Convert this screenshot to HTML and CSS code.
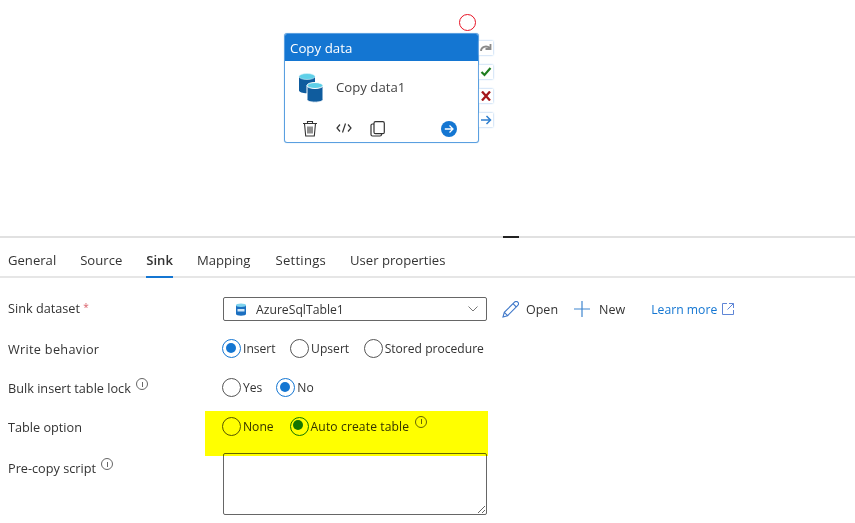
FILE: index.html
```html
<!DOCTYPE html>
<html lang="en">
<head>
<meta charset="utf-8">
<title>Copy data - Sink</title>
<link rel="stylesheet" href="styles.css">
</head>
<body>
<div class="canvas">
  <span class="marker"></span>
  <div class="node">
    <div class="node-head">Copy data</div>
    <div class="node-body">
      <svg class="db" width="30" height="30" viewBox="0 0 30 30">
        <path d="M1 3.500v14c0 1.500 3.500 2.700 8 2.700s8-1.200 8-2.700v-14z" fill="#0f5c9e"/>
        <ellipse cx="9" cy="3.500" rx="8" ry="3" fill="#5fd0e8" stroke="#d6f3fa" stroke-width=".6"/>
        <path d="M9 12.500v14c0 1.500 3.500 2.700 8 2.700s8-1.200 8-2.700v-14z" fill="#0f5c9e" stroke="#fff" stroke-width="1"/>
        <ellipse cx="17" cy="12.500" rx="8" ry="3" fill="#5fd0e8" stroke="#fff" stroke-width="1"/>
      </svg>
      <span class="node-name">Copy data1</span>
    </div>
    <div class="node-foot">
      <svg class="ic-trash" width="16" height="17" viewBox="0 0 16 17" fill="none" stroke="#333" stroke-width="1.100"><path d="M1 3.500h14M5.500 3.500V1.500h5v2M2.500 3.500l1.200 12.500h8.600l1.200-12.500M6 6.500v7M8 6.500v7M10 6.500v7"/></svg>
      <svg class="ic-code" width="16" height="10" viewBox="0 0 16 10" fill="none" stroke="#333" stroke-width="1.200"><path d="M4 1.500L1 5l3 3.500M12 1.500L15 5l-3 3.500M9.500 .5L6.500 9.500"/></svg>
      <svg class="ic-copy" width="15" height="16" viewBox="0 0 15 16" fill="none" stroke="#333" stroke-width="1.200"><rect x="4" y=".7" width="10.300" height="12" rx="1.500"/><path d="M4 3H2.500A1.500 1.500 0 0 0 1 4.500v9A1.500 1.500 0 0 0 2.500 15H10a1.500 1.500 0 0 0 1.500-1.500v-.8"/></svg>
      <svg class="ic-go" width="16" height="16" viewBox="0 0 16 16"><circle cx="8" cy="8" r="8" fill="#1476d2"/><path d="M3.800 8h8M8.500 4.500L12 8l-3.500 3.500" fill="none" stroke="#fff" stroke-width="1.300"/></svg>
    </div>
    <div class="ports">
      <span class="port"><svg width="12" height="10" viewBox="0 0 12 10" fill="none" stroke="#8a8a8a" stroke-width="1.800"><path d="M1 8c0-4 5-6 9-3M10.500 1v5h-5"/></svg></span>
      <span class="port"><svg width="12" height="10" viewBox="0 0 12 10" fill="none" stroke="#1f7d1f" stroke-width="2.200"><path d="M1.500 5l3 3 6-7"/></svg></span>
      <span class="port"><svg width="12" height="10" viewBox="0 0 12 10" fill="none" stroke="#a4161a" stroke-width="2.300"><path d="M2 .5l8 9M10 .5l-8 9"/></svg></span>
      <span class="port"><svg width="12" height="10" viewBox="0 0 12 10" fill="none" stroke="#2f7fcf" stroke-width="1.500"><path d="M1 5h9.500M6.500 1l4 4-4 4"/></svg></span>
    </div>
  </div>
</div>
<div class="splitter"><span class="grip"></span></div>
<nav class="tabs">
  <span class="tab">General</span>
  <span class="tab">Source</span>
  <span class="tab tab-active">Sink</span>
  <span class="tab tab-mapping">Mapping</span>
  <span class="tab tab-settings">Settings</span>
  <span class="tab">User properties</span>
</nav>
<form class="form">
  <div class="row row-dataset">
    <div class="label">Sink dataset <span class="req">*</span></div>
    <div class="field">
      <div class="select">
        <svg class="sql" width="12" height="13" viewBox="0 0 12 13"><path d="M1 2v9c0 1 2.200 1.700 5 1.700s5-.7 5-1.700V2z" fill="#1b6fc0"/><ellipse cx="6" cy="2.200" rx="5" ry="1.700" fill="#7fd3ee"/><rect x="2.500" y="6" width="7" height="2.500" fill="#cfe6f7"/></svg>
        <span class="select-text">AzureSqlTable1</span>
        <svg class="chev" width="10" height="6" viewBox="0 0 10 6" fill="none" stroke="#777" stroke-width="1"><path d="M.5 .5L5 5 9.500 .5"/></svg>
      </div>
      <span class="action action-open"><svg width="17" height="17" viewBox="0 0 17 17" fill="none" stroke="#3f78c9" stroke-width="1.100"><path d="M1 16l1.300-4.700L12.500 1.200a1.800 1.800 0 0 1 3.300 3.200L5.600 14.700zM2.300 11.300l3.300 3.400M11 2.700l3.300 3.300"/></svg>Open</span>
      <span class="action action-new"><svg width="16" height="16" viewBox="0 0 16 16" fill="none" stroke="#3f86cf" stroke-width="1.200"><path d="M8 0v16M0 8h16"/></svg>New</span>
      <span class="learn">Learn more <svg width="12" height="12" viewBox="0 0 12 12" fill="none" stroke="#5f86d6" stroke-width="1"><path d="M5 .5H.5v11h11V7M7 .5h4.500V5M11.500 .5L5.500 6.500"/></svg></span>
    </div>
  </div>
  <div class="row row-write">
    <div class="label">Write behavior</div>
    <div class="field radios">
      <span class="radio radio-on">Insert</span>
      <span class="radio">Upsert</span>
      <span class="radio">Stored procedure</span>
    </div>
  </div>
  <div class="row row-lock">
    <div class="label">Bulk insert table lock <span class="info"></span></div>
    <div class="field radios">
      <span class="radio">Yes</span>
      <span class="radio radio-on">No</span>
    </div>
  </div>
  <div class="row row-table">
    <div class="label">Table option</div>
    <div class="field radios">
      <span class="radio">None</span>
      <span class="radio radio-on radio-auto">Auto create table <span class="info"></span></span>
    </div>
  </div>
  <div class="row row-script">
    <div class="label">Pre-copy script <span class="info"></span></div>
    <div class="field"><textarea class="textarea"></textarea></div>
  </div>
  <div class="highlight"></div>
</form>
</body>
</html>
```
FILE: styles.css
```css
* { box-sizing: border-box; }
html, body { margin: 0; padding: 0; height: 100%; overflow: hidden; background: #fff; }
body { font-family: "Open Sans", "Noto Sans", sans-serif; font-size: 12.1px; color: #333; width: 855px; height: 523px; }

.canvas { position: relative; height: 236px; }
.marker { position: absolute; left: 459px; top: 14px; width: 17px; height: 17px; border: 1.3px solid #e81123; border-radius: 50%; }
.node { position: absolute; left: 284px; top: 33px; width: 195px; height: 110px; border: 1px solid #5a9fe0; border-radius: 3px; background: #fff; box-shadow: 0 0 1px #7ab2e6; }
.node-head { height: 27px; background: #1476d2; color: #fff; font-size: 13.3px; line-height: 28px; padding-left: 5px; border-radius: 2px 2px 0 0; }
.node-body { display: flex; align-items: center; height: 54px; padding-left: 13px; }
.node-name { margin-left: 8px; font-size: 13.2px; color: #444; position: relative; top: -1px; }
.node-foot { position: relative; height: 27px; }
.node-foot svg { position: absolute; }
.ic-trash { left: 17px; top: 5px; }
.ic-code { left: 51px; top: 8px; }
.ic-copy { left: 85px; top: 6px; }
.ic-go { left: 156px; top: 6px; }
.ports { position: absolute; left: 194px; top: 7px; display: flex; flex-direction: column; gap: 10px; }
.port { width: 14px; height: 14px; display: flex; align-items: center; justify-content: center; background: #fff; box-shadow: 0 0 2px #8db9e8; }

.splitter { position: relative; height: 2px; background: #e1e1e1; }
.grip { position: absolute; left: 503px; top: 0; width: 16px; height: 2px; background: #222; }

.tabs { display: flex; gap: 24px; height: 40px; padding-left: 8px; border-bottom: 2px solid #e6e6e6; }
.tab { height: 40px; line-height: 45px; font-size: 13.1px; color: #333; }
.tab-active { font-weight: 600; border-bottom: 2px solid #1476d2; }
.tab-mapping { margin-right: 1px; }
.tab-settings { letter-spacing: .25px; }

.form { position: relative; padding-top: 19px; }
.row { display: flex; padding-left: 8px; }
.label { width: 215px; flex: none; font-size: 12.7px; color: #333; }
.field { display: flex; align-items: center; }
.row-dataset { height: 24px; align-items: center; }
.row-dataset .label { padding-bottom: 2px; }
.row-write { margin-top: 16px; height: 24px; align-items: center; }
.row-write .label { letter-spacing: .3px; }
.row-write .radios { gap: 14.500px; }
.row-lock { margin-top: 15px; height: 24px; align-items: center; }
.row-lock .radios { gap: 14px; }
.row-table { margin-top: 15px; height: 24px; align-items: center; }
.row-table .radios { margin-top: -1px; gap: 16px; }
.radio-auto { letter-spacing: .12px; }
.radio-auto .info { margin-left: 3px; }
.row-script { margin-top: 14px; }
.row-script .label { padding-top: 6px; }

.req { color: #d9606a; font-size: 10px; position: relative; top: -2px; }
.select { display: flex; align-items: center; width: 264px; height: 24px; border: 1px solid #666; border-radius: 2px; padding-left: 11px; }
.select-text { margin-left: 9px; flex: 1; font-size: 12.2px; }
.chev { margin-right: 8px; }
.action { display: flex; align-items: center; gap: 7px; font-size: 12.5px; }
.action-open { margin-left: 15px; }
.action-new { margin-left: 16px; gap: 9px; }
.learn { display: flex; align-items: center; gap: 5px; margin-left: 26px; color: #1476d2; font-size: 12.2px; }

.radios { gap: 15px; margin-left: -1px; }
.radio { position: relative; padding-left: 21px; line-height: 18px; }
.radio::before { content: ""; position: absolute; left: 0; top: -1px; width: 17px; height: 17px; border: 1px solid #555; border-radius: 50%; }
.radio-on::before { border-color: #1476d2; }
.radio-on::after { content: ""; position: absolute; left: 3.5px; top: 2.5px; width: 10px; height: 10px; border-radius: 50%; background: #1476d2; }

.info { display: inline-block; position: relative; top: -3px; width: 12px; height: 12px; margin-left: 2px; border: 1px solid #666; border-radius: 50%; }
.info::after { content: ""; position: absolute; left: 4.5px; top: 2.5px; width: 1px; height: 5px; background: #666; }

.textarea { display: block; width: 264px; height: 62px; border: 1px solid #666; border-radius: 2px; background: #fff; margin: 0; padding: 4px; font: inherit; }

.highlight { position: absolute; left: 205px; top: 133px; width: 283px; height: 45px; background: #ffff00; mix-blend-mode: multiply; pointer-events: none; }
```
